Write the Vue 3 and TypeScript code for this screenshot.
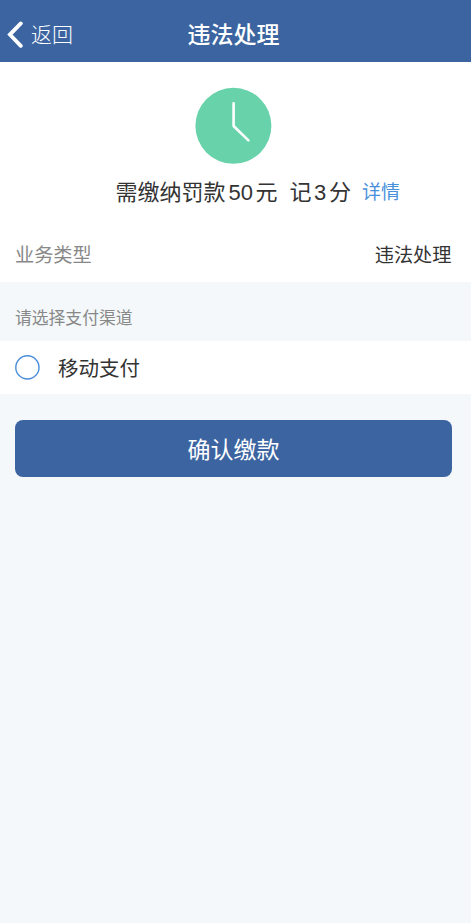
<script setup lang="ts">
import { ref } from 'vue'

const fine = 50
const points = 3
const selected = ref(false)
</script>

<template>
  <div class="page">
    <header class="nav">
      <div class="back">
        <svg width="16" height="28" viewBox="0 0 16 28" fill="none">
          <path d="M13.8 2.4 2.9 13.6l10.9 11.2" stroke="#fff" stroke-width="3.8" stroke-linecap="round" stroke-linejoin="miter" />
        </svg>
        <span>返回</span>
      </div>
      <h1>违法处理</h1>
    </header>

    <section class="summary">
      <svg class="clock" width="77" height="76" viewBox="0 0 77 76" fill="none">
        <circle cx="38.4" cy="37.8" r="38" fill="#68d2aa" />
        <path d="M38.6 15.3V38l14.8 14.4" stroke="#fff" stroke-width="2.6" stroke-linecap="round" stroke-linejoin="round" />
      </svg>
      <div class="amount">
        <span>需缴纳罚款</span>
        <span class="num fine">{{ fine }}</span>
        <span>元</span>
        <span class="record">记</span>
        <span class="num">{{ points }}</span>
        <span>分</span>
        <a class="detail">详情</a>
      </div>
      <div class="type">
        <span class="label">业务类型</span>
        <span class="value">违法处理</span>
      </div>
    </section>

    <p class="hint">请选择支付渠道</p>

    <div class="channel" @click="selected = !selected">
      <svg class="radio" width="25" height="25" viewBox="0 0 25 25" fill="none">
        <circle cx="12.4" cy="12.4" r="11.6" stroke="#4a8ddb" stroke-width="1.4" />
        <circle v-if="selected" cx="12.4" cy="12.4" r="7" fill="#4a8ddb" />
      </svg>
      <span class="name">移动支付</span>
    </div>

    <button class="confirm">确认缴款</button>
  </div>
</template>

<style>
body {
  background: #f4f8fa;
}
</style>

<style scoped>
.page {
  min-height: 923px;
  background: #f4f8fa;
  font-family: "Liberation Sans", "Noto Sans CJK SC", sans-serif;
  color: #333;
}
.nav {
  box-sizing: border-box;
  height: 62px;
  padding: 8px 8px 0 7px;
  background: #3b64a1;
  color: #fff;
  display: grid;
  grid-template-columns: 180.5px 1fr;
  align-items: center;
}
.back {
  display: flex;
  align-items: center;
  gap: 8px;
  font-size: 21px;
  line-height: 30px;
  font-weight: 300;
}
.nav h1 {
  margin: 0;
  font-size: 23px;
  line-height: 30px;
  font-weight: 500;
}
.summary {
  box-sizing: border-box;
  height: 220px;
  padding-top: 26px;
  background: #fff;
  display: flex;
  flex-direction: column;
}
.clock {
  margin-left: 195px;
  flex: none;
  overflow: visible;
}
.amount {
  margin: 12px 0 0 115.5px;
  height: 34px;
  display: flex;
  align-items: center;
  font-size: 22px;
  line-height: 34px;
}
.num {
  width: 12px;
  margin: 0 3px 0 2.5px;
}
.num.fine {
  width: 25px;
  margin: 0 2px 0 3px;
}
.record {
  margin-left: 12px;
}
.detail {
  margin-left: 11px;
  font-size: 19px;
  color: #4990dc;
}
.type {
  margin-top: 31px;
  padding: 0 19.5px 0 15px;
  display: flex;
  justify-content: space-between;
  font-size: 19.2px;
  line-height: 30px;
}
.label {
  color: #888;
}
.hint {
  box-sizing: border-box;
  margin: 0;
  padding: 8px 15px 0;
  height: 59px;
  font-size: 16.8px;
  line-height: 58px;
  color: #888;
}
.channel {
  height: 53px;
  padding-left: 15px;
  background: #fff;
  display: flex;
  align-items: center;
  gap: 18px;
  font-size: 20.5px;
}
.name {
  padding-bottom: 1px;
}
.radio {
  flex: none;
}
.confirm {
  display: block;
  width: calc(100% - 34px);
  height: 57px;
  margin: 26px 19px 0 15px;
  padding: 0 0 1px;
  border: 0;
  border-radius: 8px;
  background: #3b64a1;
  color: #fff;
  font-family: inherit;
  font-size: 23px;
}
</style>
